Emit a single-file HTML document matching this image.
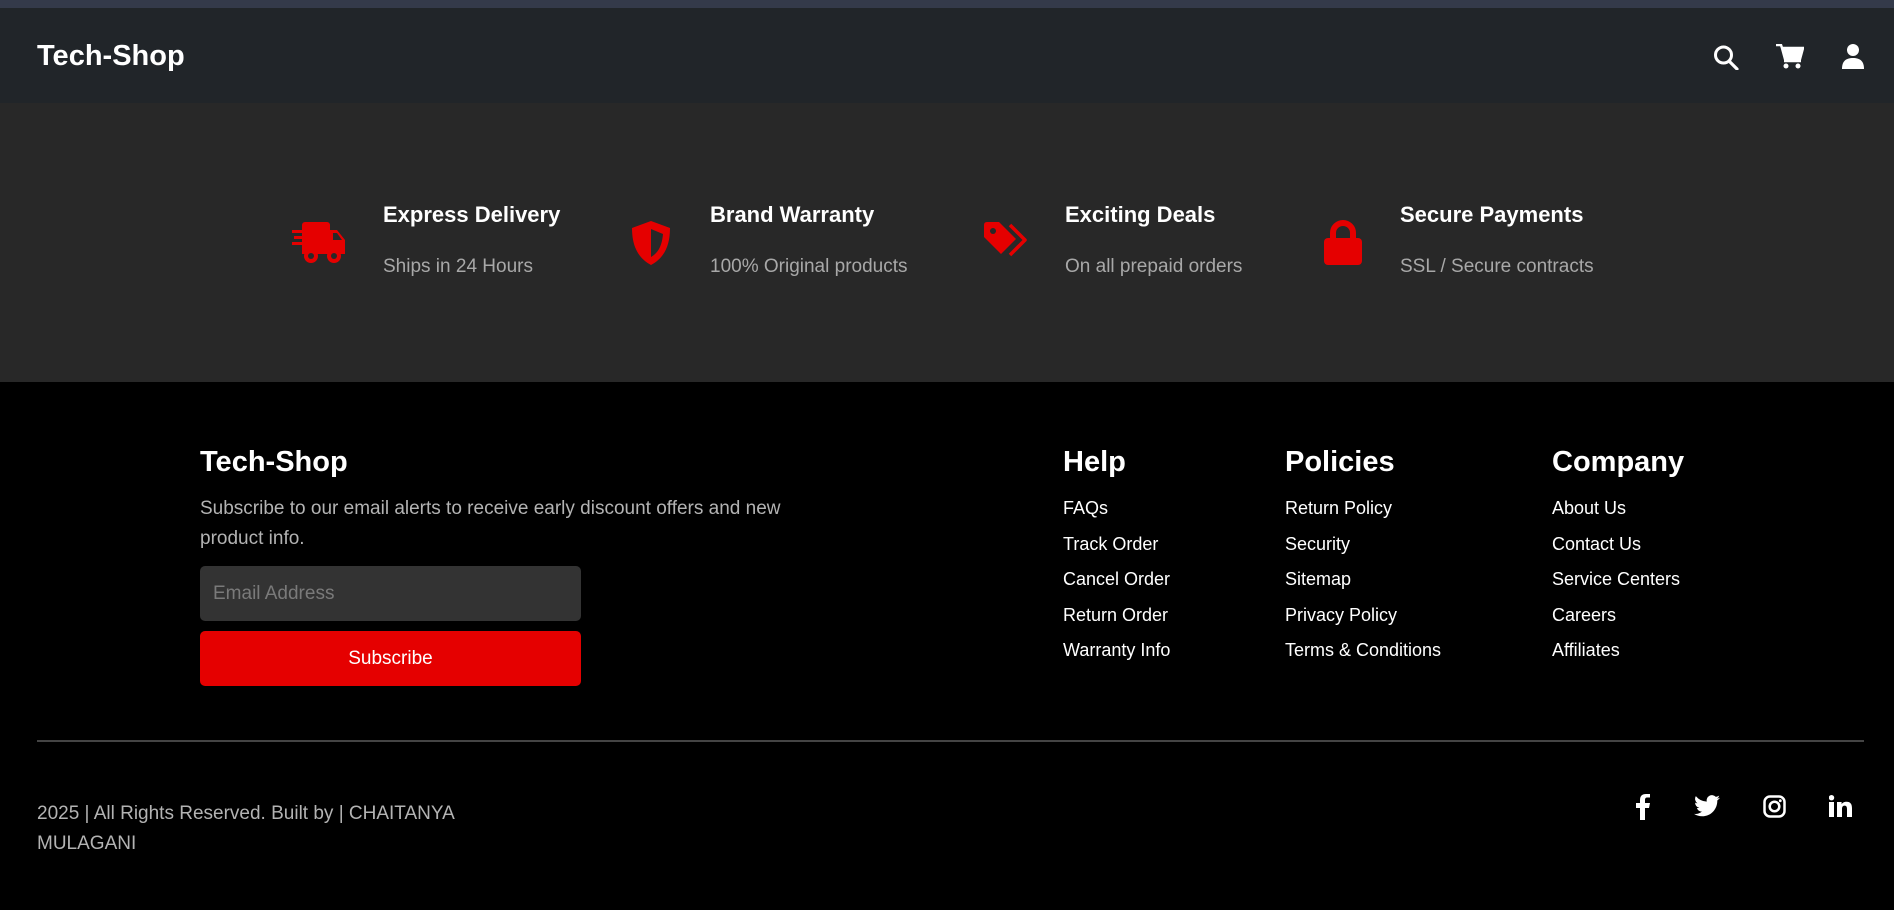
<!DOCTYPE html>
<html><head><meta charset="utf-8"><style>
*{margin:0;padding:0;box-sizing:border-box}
body{width:1894px;height:910px;overflow:hidden;background:#000;font-family:"Liberation Sans",sans-serif;position:relative}
.a{position:absolute;white-space:nowrap}
.top{left:0;top:0;width:1894px;height:8px;background:#343a4a}
.nav{left:0;top:8px;width:1894px;height:95px;background:#212529}
.feat{left:0;top:103px;width:1894px;height:279px;background:#282828}
.ft{color:#fff;font-weight:bold;font-size:22px}
.fs{color:#a8a8a8;font-size:19px}
.h{color:#fff;font-weight:bold;font-size:29px}
.l{color:#fff;font-size:18px;line-height:35.5px}
</style></head><body>
<div class="a top"></div>
<div class="a nav"></div>
<div class="a" style="left:37px;top:40px;color:#fff;font-weight:bold;font-size:29px;">Tech-Shop</div>
<svg class="a" style="left:1713px;top:45px" width="26" height="25" viewBox="0 0 26 25"><circle cx="10.5" cy="10" r="8" fill="none" stroke="#fff" stroke-width="3"/><line x1="16" y1="16" x2="24" y2="24" stroke="#fff" stroke-width="3.2" stroke-linecap="round"/></svg>
<svg class="a" style="left:1776px;top:44px" width="28" height="25" viewBox="0 0 28 25"><path d="M0 1h5l1 3h21l-3 11H9L6 4" fill="none" stroke="#fff" stroke-width="2.5"/><path d="M6 4h21l-3 11H9z" fill="#fff"/><path d="M8 17h17" stroke="#fff" stroke-width="2.5"/><circle cx="10" cy="22" r="2.5" fill="#fff"/><circle cx="22" cy="22" r="2.5" fill="#fff"/></svg>
<svg class="a" style="left:1842px;top:44px" width="22" height="25" viewBox="0 0 22 25"><circle cx="11" cy="6" r="6" fill="#fff"/><path d="M0 25c0-8 4-11 11-11s11 3 11 11z" fill="#fff"/></svg>

<div class="a feat"></div>
<svg class="a" style="left:292px;top:222px" width="54" height="42" viewBox="0 0 54 42"><rect x="10" y="0" width="28" height="28" rx="3" fill="#e50000"/><path d="M38 8h7l8 10v12H38z" fill="#e50000"/><path d="M41 11h4l5 7h-9z" fill="#282828"/><rect x="10" y="24" width="43" height="8" fill="#e50000"/><circle cx="19" cy="34" r="7" fill="#e50000"/><circle cx="19" cy="34" r="3" fill="#282828"/><circle cx="42" cy="34" r="7" fill="#e50000"/><circle cx="42" cy="34" r="3" fill="#282828"/><rect x="0" y="8" width="20" height="3" fill="#e50000"/><rect x="2" y="14" width="18" height="3" fill="#e50000"/><rect x="0" y="20" width="20" height="3" fill="#e50000"/></svg>
<div class="a ft" style="left:383px;top:202px">Express Delivery</div>
<div class="a fs" style="left:383px;top:256px">Ships in 24 Hours</div>
<svg class="a" style="left:630px;top:221px" width="42" height="44" viewBox="0 0 42 44"><path d="M21 0L40 7c0 18-6 30-19 37C8 37 2 25 2 7z" fill="#e50000"/><path d="M21 8l12 5c-1 12-5 19-12 23z" fill="#282828"/></svg>
<div class="a ft" style="left:710px;top:202px">Brand Warranty</div>
<div class="a fs" style="left:710px;top:256px">100% Original products</div>
<svg class="a" style="left:984px;top:222px" width="46" height="42" viewBox="0 0 46 42"><path d="M0 3Q0 0 3 0h12l17 17-15 15L0 15z" fill="#e50000"/><circle cx="9" cy="9" r="3" fill="#282828"/><path d="M26 3l15 15-15 15" fill="none" stroke="#e50000" stroke-width="3.5" stroke-linejoin="round"/></svg>
<div class="a ft" style="left:1065px;top:202px">Exciting Deals</div>
<div class="a fs" style="left:1065px;top:256px">On all prepaid orders</div>
<svg class="a" style="left:1323px;top:220px" width="40" height="45" viewBox="0 0 40 45"><path d="M10 20v-7a10 10 0 0 1 20 0v7" fill="none" stroke="#e50000" stroke-width="6"/><rect x="1" y="18" width="38" height="27" rx="4" fill="#e50000"/></svg>
<div class="a ft" style="left:1400px;top:202px">Secure Payments</div>
<div class="a fs" style="left:1400px;top:256px">SSL / Secure contracts</div>

<div class="a h" style="left:200px;top:446px">Tech-Shop</div>
<div class="a" style="left:200px;top:494px;width:620px;white-space:normal;color:#b3b3b3;font-size:19px;line-height:30px">Subscribe to our email alerts to receive early discount offers and new product info.</div>
<div class="a" style="left:200px;top:566px;width:381px;height:55px;background:#333;border-radius:5px;color:#7a7a7a;font-size:19px;line-height:55px;padding-left:13px">Email Address</div>
<div class="a" style="left:200px;top:631px;width:381px;height:55px;background:#e50000;border-radius:5px;color:#fff;font-size:19px;line-height:55px;text-align:center">Subscribe</div>

<div class="a h" style="left:1063px;top:446px">Help</div>
<div class="a l" style="left:1063px;top:491px">FAQs<br>Track Order<br>Cancel Order<br>Return Order<br>Warranty Info</div>
<div class="a h" style="left:1285px;top:446px">Policies</div>
<div class="a l" style="left:1285px;top:491px">Return Policy<br>Security<br>Sitemap<br>Privacy Policy<br>Terms &amp; Conditions</div>
<div class="a h" style="left:1552px;top:446px">Company</div>
<div class="a l" style="left:1552px;top:491px">About Us<br>Contact Us<br>Service Centers<br>Careers<br>Affiliates</div>

<div class="a" style="left:37px;top:740px;width:1827px;height:2px;background:#444"></div>
<div class="a" style="left:37px;top:799px;width:450px;white-space:normal;color:#b3b3b3;font-size:19px;line-height:30px">2025 | All Rights Reserved. Built by | CHAITANYA MULAGANI</div>

<svg class="a" style="left:1636px;top:794px" width="14" height="26" viewBox="0 0 14 26"><path d="M9 26V14h4l1-5H9V6c0-1.5.5-2.5 2.5-2.5H14V0h-4C6 0 4 2 4 6v3H0v5h4v12z" fill="#fff"/></svg>
<svg class="a" style="left:1694px;top:795px" width="26" height="22" viewBox="0 0 24 20"><path d="M24 2.4a10 10 0 0 1-2.8.8A5 5 0 0 0 23.3.4a10 10 0 0 1-3.1 1.2A4.9 4.9 0 0 0 11.8 6 14 14 0 0 1 1.7.9a4.9 4.9 0 0 0 1.5 6.6A5 5 0 0 1 1 6.9a4.9 4.9 0 0 0 3.9 4.8 5 5 0 0 1-2.2.1 4.9 4.9 0 0 0 4.6 3.4A9.9 9.9 0 0 1 0 17.3 14 14 0 0 0 7.5 19.5c9 0 14-7.5 14-14v-.6A10 10 0 0 0 24 2.4z" fill="#fff"/></svg>
<svg class="a" style="left:1763px;top:795px" width="23" height="23" viewBox="0 0 23 23"><rect x="1.5" y="1.5" width="20" height="20" rx="5.5" fill="none" stroke="#fff" stroke-width="2.5"/><circle cx="11.5" cy="11.5" r="4.8" fill="none" stroke="#fff" stroke-width="2.5"/><circle cx="17.3" cy="5.7" r="1.4" fill="#fff"/></svg>
<svg class="a" style="left:1829px;top:795px" width="23" height="22" viewBox="0 0 23 22"><rect x="0" y="7" width="5" height="15" fill="#fff"/><circle cx="2.5" cy="2.7" r="2.7" fill="#fff"/><path d="M8 7h4.6v2.2C13.4 7.8 15 6.7 17.5 6.7 21.5 6.7 23 9 23 13.3V22h-5v-8c0-2-.6-3.4-2.4-3.4-2 0-2.6 1.5-2.6 3.4v8H8z" fill="#fff"/></svg>
</body></html>
